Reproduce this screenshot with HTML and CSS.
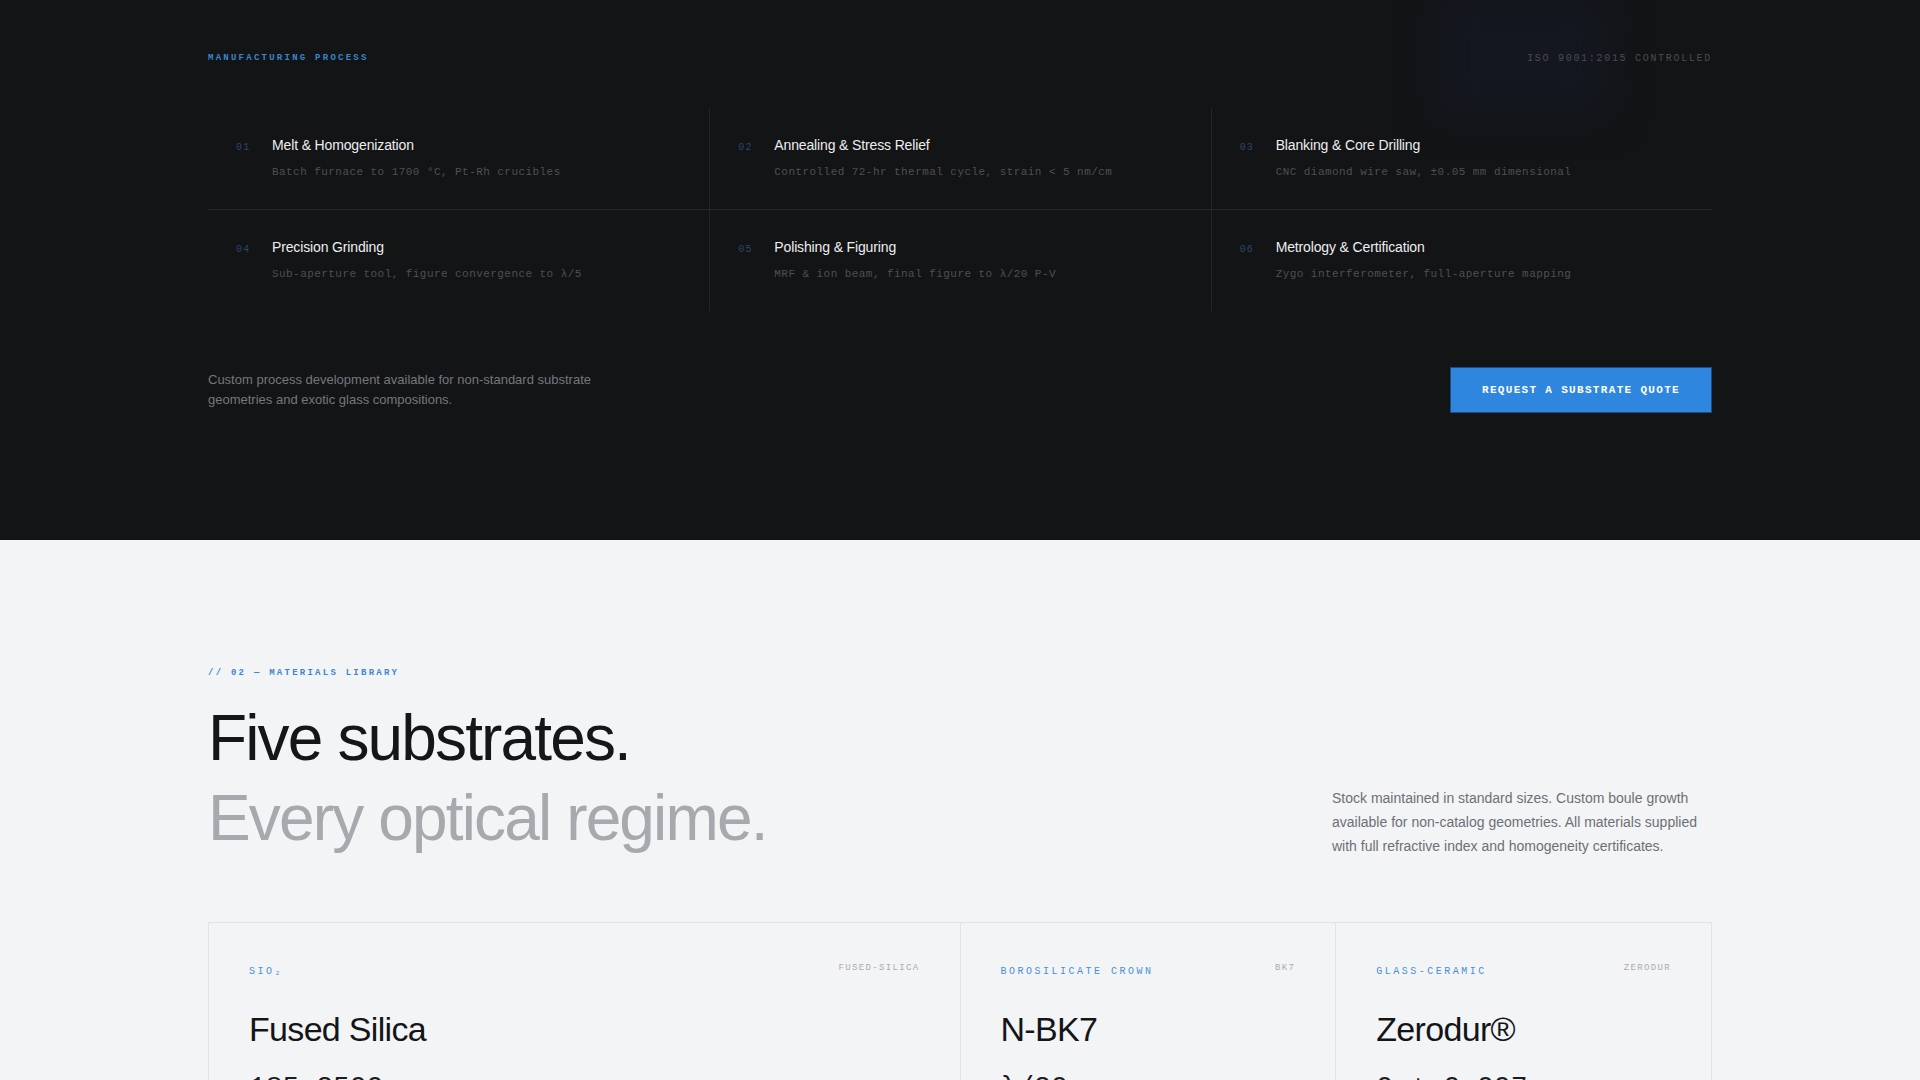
FILE: index.html
```html
<!DOCTYPE html>
<html lang="en">
<head>
    <meta charset="UTF-8">
    <meta name="viewport" content="width=device-width, initial-scale=1.0">
    <title>Optical Substrates — Process &amp; Materials</title>
    <link rel="stylesheet" href="styles.css">
</head>
<body>

    <!-- Manufacturing process -->
    <section class="process">
        <div class="container">
            <div class="process-head">
                <span class="eyebrow">Manufacturing Process</span>
                <span class="iso">ISO 9001:2015 Controlled</span>
                <div class="glow"></div>
            </div>

            <div class="steps">
                <div class="step">
                    <span class="step-num">01</span>
                    <div>
                        <h3>Melt &amp; Homogenization</h3>
                        <p>Batch furnace to 1700 °C, Pt-Rh crucibles</p>
                    </div>
                </div>
                <div class="step">
                    <span class="step-num">02</span>
                    <div>
                        <h3>Annealing &amp; Stress Relief</h3>
                        <p>Controlled 72-hr thermal cycle, strain &lt; 5 nm/cm</p>
                    </div>
                </div>
                <div class="step">
                    <span class="step-num">03</span>
                    <div>
                        <h3>Blanking &amp; Core Drilling</h3>
                        <p>CNC diamond wire saw, ±0.05 mm dimensional</p>
                    </div>
                </div>
                <div class="step">
                    <span class="step-num">04</span>
                    <div>
                        <h3>Precision Grinding</h3>
                        <p>Sub-aperture tool, figure convergence to λ/5</p>
                    </div>
                </div>
                <div class="step">
                    <span class="step-num">05</span>
                    <div>
                        <h3>Polishing &amp; Figuring</h3>
                        <p>MRF &amp; ion beam, final figure to λ/20 P-V</p>
                    </div>
                </div>
                <div class="step">
                    <span class="step-num">06</span>
                    <div>
                        <h3>Metrology &amp; Certification</h3>
                        <p>Zygo interferometer, full-aperture mapping</p>
                    </div>
                </div>
            </div>

            <div class="process-foot">
                <p>Custom process development available for non-standard substrate geometries and exotic glass compositions.</p>
                <a href="#quote" class="btn">Request a Substrate Quote</a>
            </div>
        </div>
    </section>

    <!-- Materials library -->
    <section class="materials">
        <div class="container">
            <div class="eyebrow">// 02 — Materials Library</div>

            <div class="materials-head">
                <h2>
                    <span>Five substrates.</span>
                    <span class="dim">Every optical regime.</span>
                </h2>
                <p>Stock maintained in standard sizes. Custom boule growth available for non-catalog geometries. All materials supplied with full refractive index and homogeneity certificates.</p>
            </div>

            <div class="mat-grid">
                <div class="card wide">
                    <div class="card-head">
                        <span class="card-tag">SiO₂</span>
                        <span class="card-code">fused-silica</span>
                    </div>
                    <h3>Fused Silica</h3>
                    <div class="spec">185–2500 <small>nm</small></div>
                    <div class="spec-label">Transmission range</div>
                </div>
                <div class="card">
                    <div class="card-head">
                        <span class="card-tag">Borosilicate Crown</span>
                        <span class="card-code">bk7</span>
                    </div>
                    <h3>N-BK7</h3>
                    <div class="spec">λ/20</div>
                    <div class="spec-label">Surface figure</div>
                </div>
                <div class="card">
                    <div class="card-head">
                        <span class="card-tag">Glass-Ceramic</span>
                        <span class="card-code">zerodur</span>
                    </div>
                    <h3>Zerodur®</h3>
                    <div class="spec">0 ± 0.007</div>
                    <div class="spec-label">CTE, 10⁻⁶/K</div>
                </div>
                <div class="card">
                    <div class="card-head">
                        <span class="card-tag">Crystal</span>
                        <span class="card-code">caf2</span>
                    </div>
                    <h3>Calcium Fluoride</h3>
                    <div class="spec">130–9000 <small>nm</small></div>
                    <div class="spec-label">Transmission range</div>
                </div>
                <div class="card">
                    <div class="card-head">
                        <span class="card-tag">Crystal</span>
                        <span class="card-code">sapphire</span>
                    </div>
                    <h3>Sapphire</h3>
                    <div class="spec">9 <small>Mohs</small></div>
                    <div class="spec-label">Hardness</div>
                </div>
            </div>
        </div>
    </section>

</body>
</html>
```

FILE: styles.css
```css
body {
    margin: 0;
    font-family: "Liberation Sans", Arial, sans-serif;
    background-color: #f3f4f6;
}
.container {
    max-width: 1504px;
    margin: 0 auto;
}

/* ---- manufacturing process (dark) ---- */
.process {
    background-color: #131416;
    padding: 48px 0 127px;
    overflow: hidden;
}
.process-head {
    position: relative;
    display: flex;
    justify-content: space-between;
    align-items: center;
    height: 20px;
    margin-bottom: 40px;
}
.eyebrow {
    font-family: "Liberation Mono", monospace;
    font-size: 9px;
    font-weight: bold;
    letter-spacing: 0.25em;
    text-transform: uppercase;
    color: #3a84cf;
    line-height: 14px;
}
.iso {
    position: relative;
    z-index: 1;
    font-family: "Liberation Mono", monospace;
    font-size: 10px;
    letter-spacing: 0.17em;
    text-transform: uppercase;
    color: #4a4c51;
}
/* soft blue haze behind the certification note */
.glow {
    position: absolute;
    right: 105px;
    top: -52px;
    width: 170px;
    height: 120px;
    background-color: #141720;
    filter: blur(18px);
}
.steps {
    display: grid;
    grid-template-columns: repeat(3, 1fr);
}
.step {
    display: flex;
    align-items: baseline;
    padding: 27px 28px 29px;
    border-left: 1px solid #222428;
}
.step:nth-child(3n+1) {
    border-left: none;
}
.step:nth-child(-n+3) {
    border-bottom: 1px solid #26282c;
}
.step-num {
    flex: 0 0 36px;
    font-family: "Liberation Mono", monospace;
    font-size: 10px;
    letter-spacing: 0.12em;
    color: #2b4668;
}
.step h3 {
    margin: 0;
    font-size: 14px;
    font-weight: normal;
    line-height: 20px;
    letter-spacing: -0.01em;
    color: #eceef0;
}
.step p {
    margin: 9px 0 0;
    font-family: "Liberation Mono", monospace;
    font-size: 11px;
    line-height: 16px;
    letter-spacing: 0.04em;
    color: #4d5055;
}
.process-foot {
    display: flex;
    justify-content: space-between;
    align-items: center;
    margin-top: 56px;
}
.process-foot p {
    max-width: 400px;
    margin: 0;
    font-size: 13px;
    line-height: 20px;
    color: #75787d;
}
.btn {
    display: inline-block;
    padding: 16px 31px;
    background-color: #2e86de;
    border: 1px solid #1d4c84;
    color: #ffffff;
    font-family: "Liberation Mono", monospace;
    font-size: 11px;
    font-weight: bold;
    line-height: 12px;
    letter-spacing: 0.12em;
    text-transform: uppercase;
    text-decoration: none;
}

/* ---- materials library (light) ---- */
.materials {
    padding: 126px 0 80px;
}
.materials .eyebrow {
    display: block;
    color: #3b86d2;
    margin-bottom: 18px;
}
.materials-head {
    display: flex;
    justify-content: space-between;
    align-items: flex-end;
}
.materials-head h2 {
    margin: 0;
    font-size: 64px;
    font-weight: normal;
    line-height: 80px;
    letter-spacing: -0.029em;
    color: #151618;
}
.materials-head h2 span {
    display: block;
}
.materials-head h2 .dim {
    color: #a6a9ad;
}
.materials-head p {
    max-width: 380px;
    margin: 0;
    font-size: 14px;
    line-height: 24px;
    color: #6c7076;
}
.mat-grid {
    display: grid;
    grid-template-columns: repeat(4, 1fr);
    margin-top: 64px;
    border-top: 1px solid #e1e3e7;
    border-right: 1px solid #e1e3e7;
}
.card {
    padding: 42px 40px 40px;
    border-left: 1px solid #e1e3e7;
    border-bottom: 1px solid #e1e3e7;
}
.card.wide {
    grid-column: span 2;
}
.card-head {
    display: flex;
    justify-content: space-between;
    align-items: flex-start;
}
.card-tag {
    font-family: "Liberation Mono", monospace;
    font-size: 10px;
    line-height: 14px;
    letter-spacing: 0.25em;
    text-transform: uppercase;
    color: #4a8fd6;
}
.card-code {
    margin-top: -3px;
    font-family: "Liberation Mono", monospace;
    font-size: 9px;
    line-height: 12px;
    letter-spacing: 0.15em;
    text-transform: uppercase;
    color: #a9acb1;
}
.card h3 {
    margin: 31px 0 0;
    font-size: 34px;
    font-weight: normal;
    line-height: 38px;
    letter-spacing: -0.02em;
    color: #141517;
}
.spec {
    margin-top: 23px;
    font-family: "Liberation Mono", monospace;
    font-size: 28px;
    line-height: 34px;
    color: #1c1d20;
}
.spec small {
    font-size: 13px;
    color: #8a8d92;
}
.spec-label {
    margin-top: 6px;
    font-family: "Liberation Mono", monospace;
    font-size: 10px;
    letter-spacing: 0.15em;
    text-transform: uppercase;
    color: #9a9da2;
}
```
